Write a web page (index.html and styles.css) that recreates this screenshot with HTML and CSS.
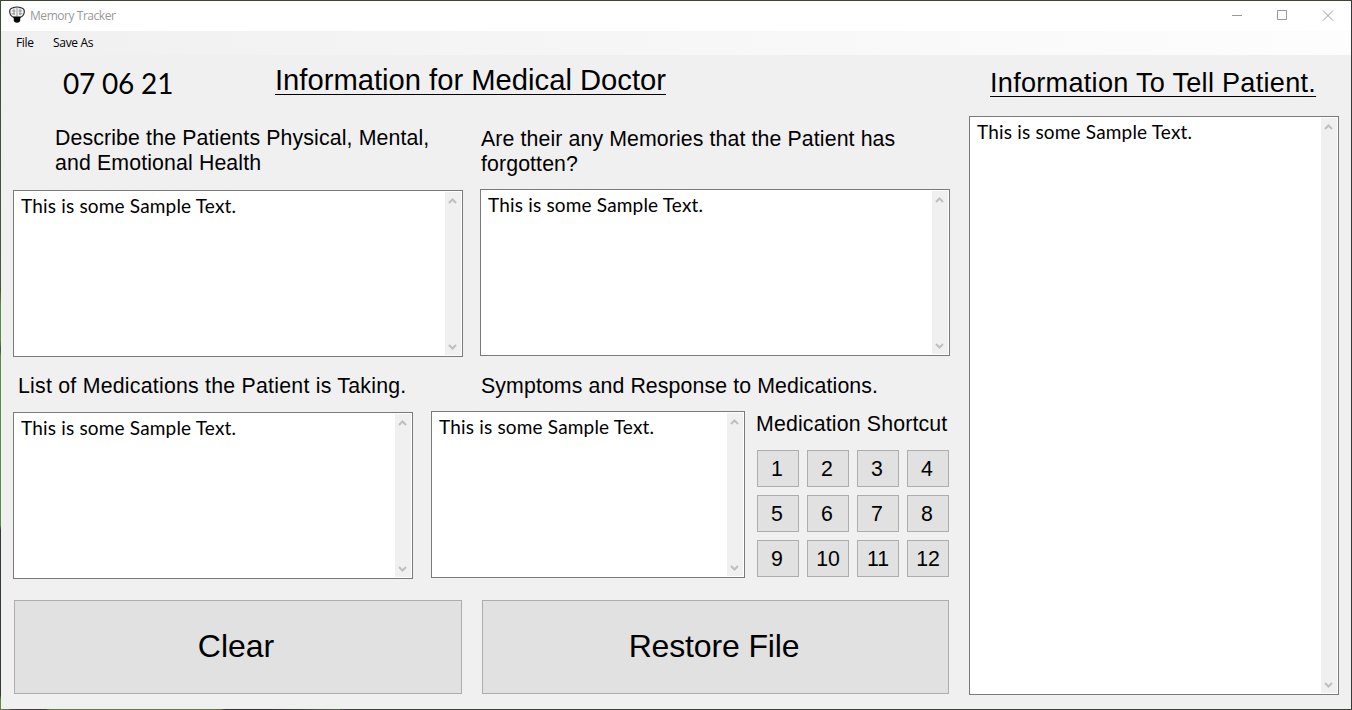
FILE: index.html
```html
<!DOCTYPE html>
<html lang="en">
<head>
<meta charset="utf-8">
<title>Memory Tracker</title>
<link rel="stylesheet" href="styles.css">
</head>
<body>
<svg class="defs" aria-hidden="true">
  <symbol id="up" viewBox="0 0 9 6"><path d="M1 5 4.500 1.500 8 5" fill="none" stroke="#bfbfbf" stroke-width="2"/></symbol>
  <symbol id="down" viewBox="0 0 9 6"><path d="M1 1 4.500 4.500 8 1" fill="none" stroke="#bfbfbf" stroke-width="2"/></symbol>
</svg>
<div class="window">
  <header class="titlebar">
    <svg class="logo" viewBox="0 0 16 17"><path d="M5 11.500C3 10.800 1 9 .8 6.500.4 4 2 2.200 4 1.800 6 .7 10 .7 12 1.800 14 2.200 15.600 4 15.200 6.500 15 9 13 10.800 11 11.500Z" fill="#f0f0f0" stroke="#222" stroke-width="1.100"/><path d="M8 1V10.500M3 5H6.500M9.500 5H13M5 2.500V9M11 2.500V9M2.500 7.800H6M10 7.800H13.500" stroke="#777" stroke-width=".7" fill="none"/><path d="M4.300 10.500H11.700L11.200 13V15Q10.500 16.800 8 16.800 5.500 16.800 4.800 15V13Z" fill="#050505"/></svg>
    <span class="app-name">Memory Tracker</span>
    <svg class="controls" viewBox="0 0 102 11" fill="none" stroke="#999"><path d="M0 5.500H10M45.500.5H54.500V9.500H45.500ZM91 .5 101 10.500M101 .5 91 10.500"/></svg>
  </header>
  <nav class="menu"><span>File</span><span>Save As</span></nav>
  <main class="content">
    <div class="doctor">
      <div class="heading-row"><time class="date">07 06 21</time><h1 class="title">Information for Medical Doctor</h1></div>
      <div class="row row-top">
        <section class="health">
          <h2 class="label health-label">Describe the Patients Physical, Mental,<br>and Emotional Health</h2>
          <div class="box"><p class="sample">This is some Sample Text.</p><div class="scroll"><svg><use href="#up"/></svg><svg><use href="#down"/></svg></div></div>
        </section>
        <section class="memories">
          <h2 class="label memories-label">Are their any Memories that the Patient has<br>forgotten?</h2>
          <div class="box"><p class="sample">This is some Sample Text.</p><div class="scroll"><svg><use href="#up"/></svg><svg><use href="#down"/></svg></div></div>
        </section>
      </div>
      <div class="row row-labels"><h2 class="label list-label">List of Medications the Patient is Taking.</h2><h2 class="label symptoms-label">Symptoms and Response to Medications.</h2></div>
      <div class="row row-meds">
        <div class="box box-list"><p class="sample">This is some Sample Text.</p><div class="scroll"><svg><use href="#up"/></svg><svg><use href="#down"/></svg></div></div>
        <div class="box box-symptoms"><p class="sample">This is some Sample Text.</p><div class="scroll"><svg><use href="#up"/></svg><svg><use href="#down"/></svg></div></div>
        <section class="shortcuts">
          <h2 class="label shortcut-label">Medication Shortcut</h2>
          <div class="keys"><button>1</button><button>2</button><button>3</button><button>4</button><button>5</button><button>6</button><button>7</button><button>8</button><button>9</button><button class="wide">10</button><button class="wide">11</button><button class="wide">12</button></div>
        </section>
      </div>
      <div class="actions"><button>Clear</button><button class="restore">Restore File</button></div>
    </div>
    <section class="patient">
      <h1 class="title patient-title">Information To Tell Patient.</h1>
      <div class="box box-patient"><p class="sample">This is some Sample Text.</p><div class="scroll"><svg><use href="#up"/></svg><svg><use href="#down"/></svg></div></div>
    </section>
  </main>
</div>
</body>
</html>
```
FILE: styles.css
```css
* { box-sizing: border-box; margin: 0; padding: 0; }
body { width: 1352px; height: 710px; overflow: hidden; font-family: "Liberation Sans", Arial, sans-serif; color: #000; }
h1, h2 { font-weight: 400; white-space: nowrap; }
.defs { display: none; }
.window { position: relative; height: 710px; border: 1px solid #3c4436; border-right-color: #34393a; background: #f0f0f0; }
/* desktop showing past the left and bottom edges of the window */
.window::before { content: ""; position: absolute; left: -1px; top: -1px; width: 1px; height: 710px; background: linear-gradient(#3c4a35 0, #45593a 290px, #5f8848 305px, #5f8848 340px, #40543a 350px, #5f8848 356px, #5f8848 525px, #333b35 530px, #333b35 695px, #5f8848 700px); }
.window::after { content: ""; position: absolute; left: -1px; bottom: -1px; width: 340px; height: 1px; background: linear-gradient(90deg, #5f7848 8px, #4a3b38 12px 45px, #5f7848 50px 220px, #30362f 225px 270px, #4c6443); }
.titlebar { display: flex; height: 30px; background: #fff; padding: 5px 17px 0 8px; }
.logo { width: 16px; height: 17px; }
.app-name { margin: 0 auto 0 5px; font: 12px/20px "Open Sans", sans-serif; color: #999; letter-spacing: -.45px; }
.controls { width: 102px; height: 11px; margin-top: 4px; }
.menu { display: flex; gap: 19.500px; height: 24px; padding-left: 15px; background: linear-gradient(90deg, #f0f0f0, #fdfdfd); font: 12px/24px "Open Sans", sans-serif; letter-spacing: -.35px; }
.content { display: flex; gap: 19px; padding-left: 12px; }
.doctor { width: 937px; }
.heading-row { display: flex; height: 70px; }
.date { width: 212px; padding-left: 50px; margin-right: 50px; font: 28px/56px Lato, sans-serif; letter-spacing: -.2px; }
.title { font-size: 29.200px; line-height: 50px; text-decoration: underline; text-decoration-thickness: 1px; text-underline-offset: 4px; text-decoration-skip-ink: none; }
.row { display: flex; }
.row-top { gap: 17px; }
.label { font-size: 21.300px; line-height: 25px; letter-spacing: .11px; }
.health { width: 450px; }
.memories { width: 470px; padding-top: 2px; }
.health-label { height: 65px; padding: 1px 0 0 42px; letter-spacing: .13px; }
.memories-label { height: 62px; padding-left: 1px; }
.box { display: flex; justify-content: space-between; height: 167px; border: 1px solid #7a7a7a; background: #fff; }
.sample { padding: 3px 0 0 7px; font: 19px/23px Lato, sans-serif; letter-spacing: .18px; white-space: nowrap; }
.scroll { display: flex; flex-direction: column; justify-content: space-between; align-items: center; width: 16px; margin: 1px; padding: 6px 1px 5px 0; background: #f0f0f0; }
.scroll svg { width: 9px; height: 6px; }
.row-labels { height: 54px; padding-top: 17px; }
.list-label { width: 468px; padding-left: 5px; letter-spacing: .24px; }
.row-meds { height: 168px; }
.box-list { width: 400px; margin-top: 1px; }
.box-symptoms { width: 314px; margin-left: 18px; }
.shortcuts { margin-left: 12px; }
.shortcut-label { height: 39px; padding-top: 1px; margin-left: -1px; letter-spacing: .17px; }
.keys { display: grid; grid-template-columns: repeat(4, 42px); grid-auto-rows: 37px; gap: 8px; }
button { border: 1px solid #adadad; background: #e1e1e1; color: #000; font: 21.300px "Liberation Sans", Arial, sans-serif; padding: 2px 2px 0 0; }
.keys .wide { padding-right: 0; }
.actions { display: grid; grid-template-columns: 448px 467px; gap: 20px; padding: 21px 0 0 1px; }
.actions button { height: 94px; font-size: 32px; padding: 0 4px 2px 0; }
.actions .restore { letter-spacing: -.15px; padding-right: 3px; }
.patient { width: 370px; }
.patient-title { height: 61px; padding: 3px 0 0 21px; font-size: 27.100px; letter-spacing: .28px; }
.box-patient { height: 579px; }
```
